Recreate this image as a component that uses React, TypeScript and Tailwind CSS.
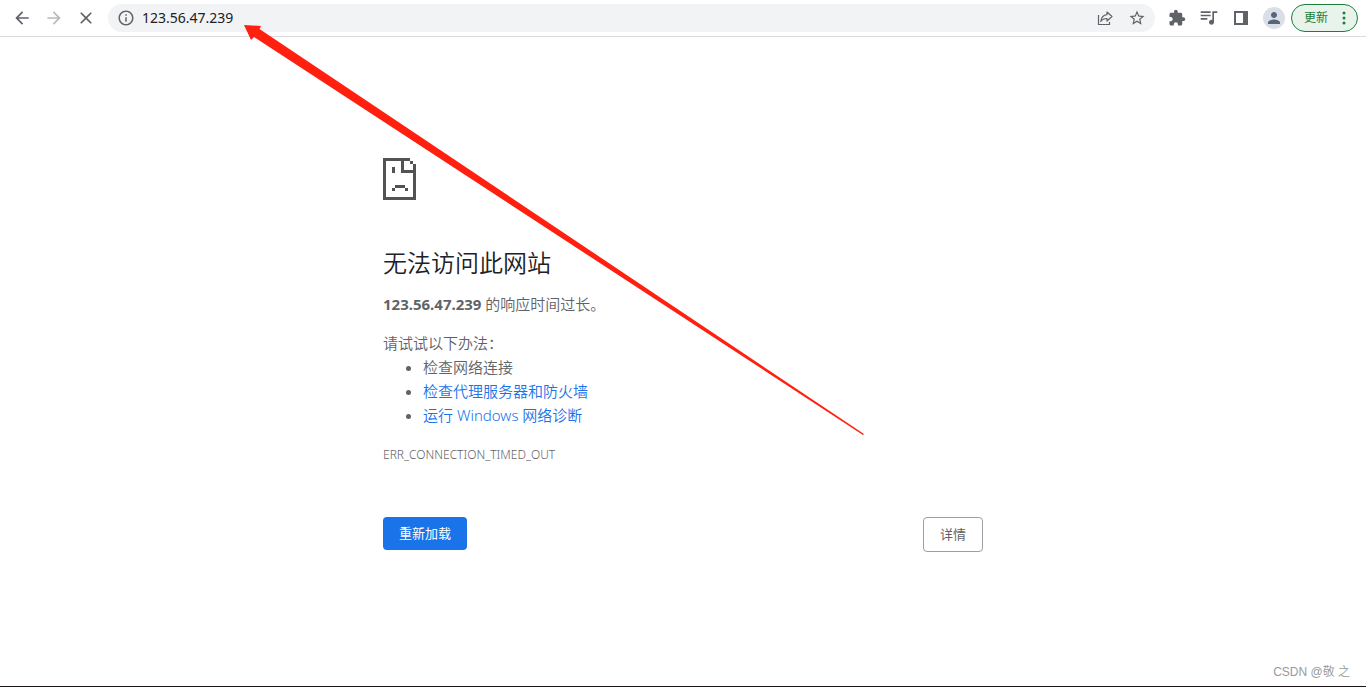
import React from "react"

const tips = [
  { label: "检查网络连接" },
  { label: "检查代理服务器和防火墙", href: "#proxy" },
  { label: "运行 Windows 网络诊断", href: "#diagnose" },
]

type IconProps = {
  d: string
  className?: string
}

const Icon: React.FC<IconProps> = ({ d, className = "size-5" }) => (
  <svg viewBox="0 0 24 24" fill="currentColor" aria-hidden="true" className={className}>
    <path d={d} />
  </svg>
)

const icons = {
  back: "M20 11H7.83l5.59-5.59L12 4l-8 8 8 8 1.41-1.41L7.83 13H20v-2z",
  forward: "M12 4l-1.41 1.41L16.17 11H4v2h12.17l-5.58 5.59L12 20l8-8z",
  stop: "M19 6.41L17.59 5 12 10.59 6.41 5 5 6.41 10.59 12 5 17.59 6.41 19 12 13.41 17.59 19 19 17.59 13.41 12z",
  info: "M11 7h2v2h-2zm0 4h2v6h-2zm1-9C6.48 2 2 6.48 2 12s4.48 10 10 10 10-4.48 10-10S17.52 2 12 2zm0 18c-4.41 0-8-3.59-8-8s3.59-8 8-8 8 3.59 8 8-3.59 8-8 8z",
  star: "M22 9.24l-7.19-.62L12 2 9.19 8.63 2 9.24l5.46 4.73L5.82 21 12 17.27 18.18 21l-1.63-7.03L22 9.24zM12 15.4l-3.76 2.27 1-4.28-3.32-2.88 4.38-.38L12 6.1l1.71 4.04 4.38.38-3.32 2.88 1 4.28L12 15.4z",
  extension:
    "M20.5 11H19V7c0-1.1-.9-2-2-2h-4V3.5C13 2.12 11.88 1 10.5 1S8 2.12 8 3.5V5H4c-1.1 0-1.99.9-1.99 2v3.8H3.5c1.49 0 2.7 1.21 2.7 2.7s-1.21 2.7-2.7 2.7H2V20c0 1.1.9 2 2 2h3.8v-1.5c0-1.49 1.21-2.7 2.7-2.7 1.49 0 2.7 1.21 2.7 2.7V22H17c1.1 0 2-.9 2-2v-4h1.5c1.38 0 2.5-1.12 2.5-2.5S21.88 11 20.5 11z",
  queue:
    "M14 4H2v2h12V4zm0 4H2v2h12V8zM2 14h8v-2H2v2zM16 4v10.18c-.31-.11-.65-.18-1-.18-1.66 0-3 1.34-3 3s1.34 3 3 3 3-1.34 3-3V6h4V4h-6z",
  person:
    "M12 12c2.21 0 4-1.79 4-4s-1.79-4-4-4-4 1.79-4 4 1.79 4 4 4zm0 2c-2.67 0-8 1.34-8 4v2h16v-2c0-2.66-5.33-4-8-4z",
}

const ShareIcon = () => (
  <svg viewBox="0 0 16 16" fill="none" stroke="currentColor" strokeWidth="1.2" aria-hidden="true" className="size-4">
    <path d="M1.5 5v9.5h11V12" />
    <path d="M10 2l5 4.500-5 4.500V8.500c-3 0-4.800.9-6.200 3C4.200 7.500 6.500 5 10 4.600z" strokeLinejoin="round" />
  </svg>
)

const SidePanelIcon = () => (
  <svg viewBox="0 0 14 14" fill="currentColor" aria-hidden="true" className="size-3.5">
    <path fillRule="evenodd" d="M0 0h14v14H0zM2 2v10h7V2z" />
  </svg>
)

const SadPage = () => (
  <svg
    viewBox="0 0 33 42"
    fill="#535353"
    shapeRendering="crispEdges"
    aria-hidden="true"
    className="h-[42px] w-[33px]"
  >
    <path d="M0 0h27v3H3v36h27V15H18V3h3v9h9V6h3v36H0zM27 3h3v3h-3zM9 9h3v6H9zM12 27h10v3H12zM9 30h3v3H9zM22 30h3v3h-3z" />
  </svg>
)

const Toolbar = () => (
  <header className="flex h-[37px] items-center border-b border-[#dadce0] pl-3 pr-2 text-[#5f6368]">
    <div className="flex items-center gap-3">
      <button aria-label="后退">
        <Icon d={icons.back} />
      </button>
      <button aria-label="前进" className="text-[#bababa]">
        <Icon d={icons.forward} />
      </button>
      <button aria-label="停止">
        <Icon d={icons.stop} />
      </button>
    </div>
    <div className="ml-3 flex h-7 flex-1 items-center rounded-full bg-[#f1f3f4] px-[9px]">
      <Icon d={icons.info} className="size-[18px]" />
      <input
        aria-label="地址栏"
        defaultValue="123.56.47.239"
        className="ml-[7px] min-w-0 flex-1 bg-transparent text-sm text-[#202124] outline-none"
      />
      <button aria-label="分享">
        <ShareIcon />
      </button>
      <button aria-label="收藏" className="ml-[15px]">
        <Icon d={icons.star} className="size-[18px]" />
      </button>
    </div>
    <div className="ml-3 flex items-center gap-3">
      <button aria-label="扩展程序" className="p-px">
        <Icon d={icons.extension} className="size-[18px]" />
      </button>
      <button aria-label="媒体控件">
        <Icon d={icons.queue} />
      </button>
      <button aria-label="侧边栏" className="p-[3px]">
        <SidePanelIcon />
      </button>
      <button
        aria-label="个人资料"
        className="flex size-[22px] items-center justify-center rounded-full bg-[#dadfe7] text-[#56657b]"
      >
        <Icon d={icons.person} className="size-[18px]" />
      </button>
    </div>
    <button className="ml-1.5 flex h-7 items-center gap-3.5 rounded-full border border-[#188038] bg-[#e8f3ec] pl-3 pr-[11px] text-xs text-[#188038]">
      更新
      <svg viewBox="0 0 4 14" fill="currentColor" aria-hidden="true" className="h-3.5 w-1">
        <circle cx="2" cy="2" r="1.5" />
        <circle cx="2" cy="7" r="1.5" />
        <circle cx="2" cy="12" r="1.5" />
      </svg>
    </button>
  </header>
)

const ErrorPage = () => (
  <main className="mx-auto w-full max-w-[600px] pt-[121px] text-[15px] leading-6 font-[350] text-[#5f6368]">
    <SadPage />
    <h1 className="mt-12 text-2xl leading-[30px] text-[#202124]">无法访问此网站</h1>
    <p className="mt-3.5">
      <strong className="font-bold">123.56.47.239</strong> 的响应时间过长。
    </p>
    <p className="mt-[15px]">请试试以下办法：</p>
    <ul className="list-disc pl-10">
      {tips.map(({ label, href }) => (
        <li key={label}>
          {href ? (
            <a href={href} className="text-[#1a73e8]">
              {label}
            </a>
          ) : (
            label
          )}
        </li>
      ))}
    </ul>
    <p className="mt-4 text-xs leading-6">ERR_CONNECTION_TIMED_OUT</p>
    <div className="mt-[50px] flex items-start justify-between text-[13px] leading-[17px] font-normal">
      <button className="rounded bg-[#1a73e8] px-4 py-2 text-white">重新加载</button>
      <button className="rounded border border-[#9aa0a6] px-4 py-2">详情</button>
    </div>
  </main>
)

const Arrow = () => (
  <svg
    viewBox="0 0 620 412"
    fill="#ff2010"
    aria-hidden="true"
    className="pointer-events-none absolute left-[244px] top-[24px] h-[412px] w-[620px]"
  >
    <path d="M0 1L17 2 15.500 5 620 410 619 411 10 13 7 16z" />
  </svg>
)

const App = () => {
  return (
    <div className="relative flex min-h-screen flex-col border-b border-[#1c1619] bg-white font-['Noto_Sans','Noto_Sans_CJK_SC',sans-serif]">
      <Toolbar />
      <ErrorPage />
      <footer className="mt-auto pb-1 pr-4 text-right font-['Liberation_Sans','Noto_Sans_CJK_SC',sans-serif] text-xs leading-5 font-[350] text-[#999]">
        CSDN @敬 之
      </footer>
      <Arrow />
    </div>
  )
}

export default App
